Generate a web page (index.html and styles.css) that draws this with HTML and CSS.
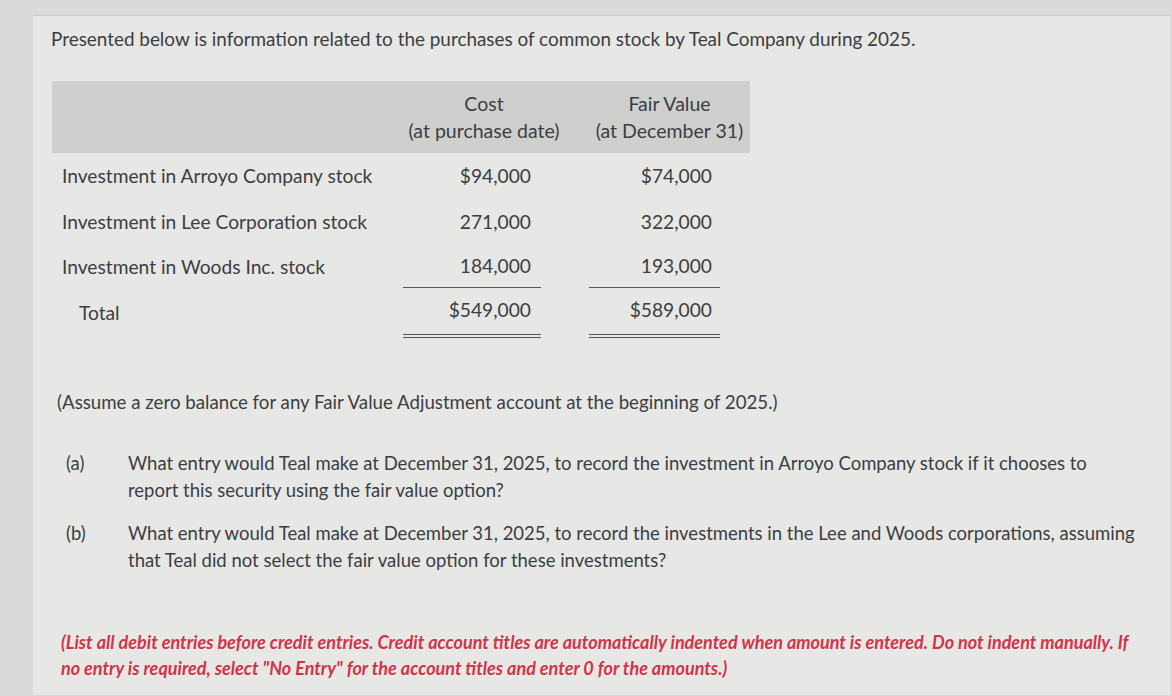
FILE: index.html
```html
<!DOCTYPE html>
<html lang="en">
<head>
<meta charset="utf-8">
<title>Teal Company investments</title>
<link rel="stylesheet" href="styles.css">
</head>
<body>
<main class="panel">
  <p class="intro">Presented below is information related to the purchases of common stock by Teal Company during 2025.</p>

  <div class="table">
    <div class="thead">
      <div class="th-label"></div>
      <div class="th">Cost<br>(at purchase date)</div>
      <div class="th">Fair Value<br>(at December 31)</div>
    </div>
    <div class="row">
      <div class="label">Investment in Arroyo Company stock</div>
      <div class="cell cost">$94,000</div>
      <div class="cell fair">$74,000</div>
    </div>
    <div class="row">
      <div class="label">Investment in Lee Corporation stock</div>
      <div class="cell cost">271,000</div>
      <div class="cell fair">322,000</div>
    </div>
    <div class="row">
      <div class="label">Investment in Woods Inc. stock</div>
      <div class="cell cost single">184,000</div>
      <div class="cell fair single">193,000</div>
    </div>
    <div class="row">
      <div class="label total">Total</div>
      <div class="cell cost double">$549,000</div>
      <div class="cell fair double">$589,000</div>
    </div>
  </div>

  <p class="assume">(Assume a zero balance for any Fair Value Adjustment account at the beginning of 2025.)</p>

  <div class="question q-a">
    <span class="q-tag">(a)</span>
    <span class="q-text">What entry would Teal make at December 31, 2025, to record the investment in Arroyo Company stock if it chooses to report this security using the fair value option?</span>
  </div>
  <div class="question q-b">
    <span class="q-tag">(b)</span>
    <span class="q-text">What entry would Teal make at December 31, 2025, to record the investments in the Lee and Woods corporations, assuming that Teal did not select the fair value option for these investments?</span>
  </div>

  <p class="note">(List all debit entries before credit entries. Credit account titles are automatically indented when amount is entered. Do not indent manually. If no entry is required, select "No Entry" for the account titles and enter 0 for the amounts.)</p>
</main>
</body>
</html>
```
FILE: styles.css
```css
html, body {
  margin: 0;
  height: 100%;
}
body {
  background: #dadad8;
  font-family: Lato, "Open Sans", sans-serif;
  color: #3b3e43;
  font-size: 18.5px;
  overflow: hidden;
}
.panel {
  margin: 15px 2px 0 33px;
  height: 680px;
  background: #e7e7e5;
  border-top: 1px solid #cacac8;
  padding: 0 0 0 18px;
  box-sizing: border-box;
}
.intro {
  margin: 0;
  padding-top: 11px;
  line-height: 24px;
  font-size: 18.9px;
}
.table {
  margin-top: 30px;
  width: 698px;
  margin-left: 1px;
  font-size: 19.2px;
}
.thead {
  display: grid;
  grid-template-columns: 351px 162px 24px 161px;
  background: #cfcfce;
  padding: 9px 0;
  font-size: 19.5px;
}
.th {
  text-align: center;
  line-height: 27px;
}
.thead .th:nth-child(3) {
  grid-column: 4;
}
.row {
  display: grid;
  grid-template-columns: 351px 138px 48px 131px;
  height: 45.5px;
}
.label {
  padding-left: 10px;
  display: flex;
  align-items: center;
}
.label.total {
  padding-left: 27px;
  padding-bottom: 3px;
}
.cell {
  display: flex;
  align-items: center;
  justify-content: flex-end;
}
.cost {
  grid-column: 2;
  padding-right: 10px;
}
.fair {
  grid-column: 4;
  padding-right: 8px;
}
.single {
  border-bottom: 1px solid #55585c;
  height: 43px;
}
.double {
  border-bottom: 4px double #55585c;
  height: 48px;
  padding-top: 0;
  padding-bottom: 4px;
  box-sizing: border-box;
}
.assume {
  margin: 55px 0 0 6px;
  line-height: 24px;
  font-size: 18.7px;
}
.question {
  display: flex;
  margin-left: 15px;
  line-height: 27px;
  padding-right: 30px;
}
.q-a {
  margin-top: 36px;
}
.q-b {
  margin-top: 16px;
}
.q-tag {
  flex: 0 0 62px;
}
.q-text {
  flex: 1;
}
.note {
  margin: 55px 30px 0 10px;
  color: #cf3549;
  font-style: italic;
  font-weight: 700;
  font-size: 18px;
  line-height: 26px;
}
```
